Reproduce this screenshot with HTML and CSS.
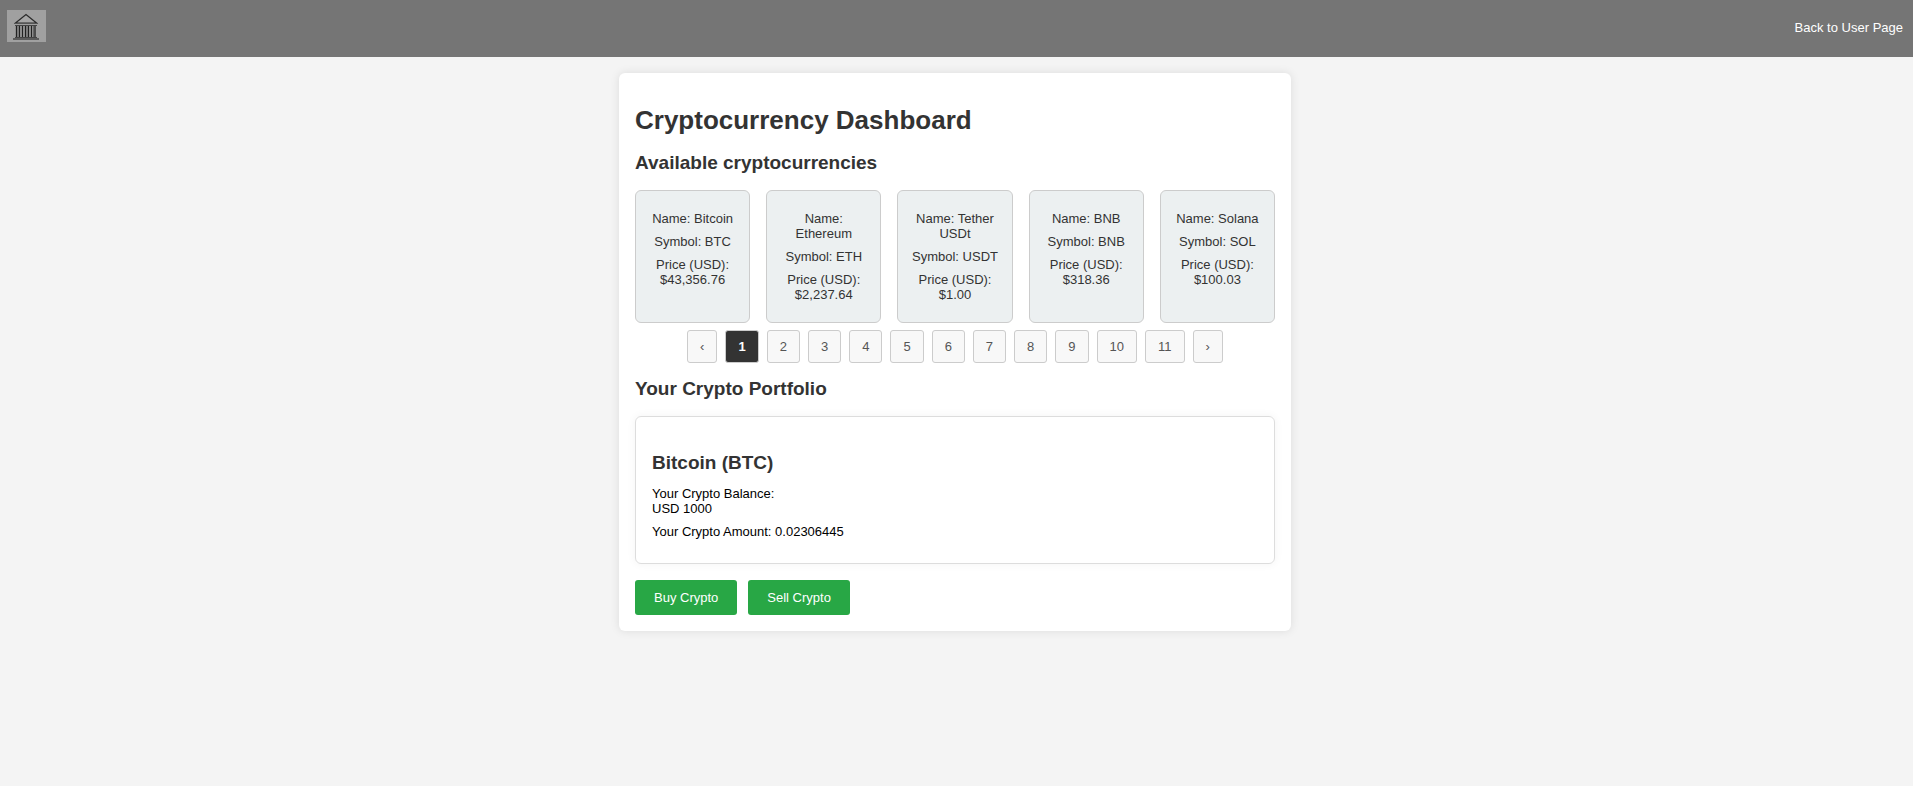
FILE: index.html
```html
<!DOCTYPE html>
<html lang="en">
<head>
<meta charset="utf-8">
<title>Cryptocurrency Dashboard</title>
<link rel="stylesheet" href="styles.css">
</head>
<body>
<header class="navbar">
  <a class="logo" href="#" aria-label="Home">
    <svg width="39" height="32" viewBox="0 0 39 32" aria-hidden="true">
      <rect width="39" height="32" fill="#a0a0a0"/>
      <path d="M8.5 13 19 4.5 29.5 13Z" fill="#a6a6a6" stroke="#2a2a2a" stroke-width="1.2"/>
      <path d="M7 13.5H31" stroke="#555" stroke-width="1"/>
      <path d="M8 15.5H30" stroke="#444" stroke-width="1"/>
      <path d="M9.5 16V27M12.5 16V27M15.5 16V27M18.5 16V27M21.5 16V27M24.5 16V27M28 16V27" stroke="#222" stroke-width="1.3"/>
      <path d="M11 16V27M20 16V27M26.5 16V27" stroke="#666" stroke-width="1"/>
      <path d="M8 27.5H30" stroke="#444" stroke-width="1"/>
      <path d="M6 29H32" stroke="#5c5c5c" stroke-width="2"/>
    </svg>
  </a>
  <a class="nav-link" href="#">Back to User Page</a>
</header>
<div class="page">
<main class="container">
  <h1>Cryptocurrency Dashboard</h1>
  <h2>Available cryptocurrencies</h2>
  <div class="crypto-list">
    <article class="crypto-card"><p>Name: Bitcoin</p><p>Symbol: BTC</p><p>Price (USD): $43,356.76</p></article>
    <article class="crypto-card"><p>Name: Ethereum</p><p>Symbol: ETH</p><p>Price (USD): $2,237.64</p></article>
    <article class="crypto-card"><p>Name: Tether USDt</p><p>Symbol: USDT</p><p>Price (USD): $1.00</p></article>
    <article class="crypto-card"><p>Name: BNB</p><p>Symbol: BNB</p><p>Price (USD): $318.36</p></article>
    <article class="crypto-card"><p>Name: Solana</p><p>Symbol: SOL</p><p>Price (USD): $100.03</p></article>
  </div>
  <nav class="pagination" aria-label="Pages">
    <a href="#" aria-label="Previous">‹</a>
    <a href="#" class="active" aria-current="page">1</a>
    <a href="#">2</a>
    <a href="#">3</a>
    <a href="#">4</a>
    <a href="#">5</a>
    <a href="#">6</a>
    <a href="#">7</a>
    <a href="#">8</a>
    <a href="#">9</a>
    <a href="#">10</a>
    <a href="#">11</a>
    <a href="#" aria-label="Next">›</a>
  </nav>
  <h2>Your Crypto Portfolio</h2>
  <section class="portfolio">
    <h2>Bitcoin (BTC)</h2>
    <p>Your Crypto Balance:<br>USD 1000</p>
    <p>Your Crypto Amount: 0.02306445</p>
  </section>
  <div class="actions">
    <button type="button">Buy Crypto</button>
    <button type="button">Sell Crypto</button>
  </div>
</main>
</div>
</body>
</html>
```
FILE: styles.css
```css
* {
  box-sizing: border-box;
}

body {
  margin: 0;
  background: #f4f4f4;
  color: #000;
  font: 13px/15px "Liberation Sans", Arial, sans-serif;
}

h1, h2, p {
  margin: 0;
}

h1, h2 {
  color: #333;
}

h1 {
  margin-top: 16px;
  font-size: 26px;
  line-height: 30px;
}

h2 {
  margin: 16px 0;
  font-size: 19px;
  line-height: 23px;
}

.navbar {
  display: flex;
  justify-content: space-between;
  align-items: flex-start;
  padding: 10px 10px 15px 7px;
  background: #757575;
}

.logo, .logo svg {
  display: block;
}

.nav-link {
  padding-top: 10px;
  color: #fff;
  text-decoration: none;
}

.page {
  padding: 16px 3px 16px 0;
}

.container {
  max-width: 672px;
  margin: 0 auto;
  padding: 16px;
  border-radius: 6px;
  background: #fff;
  box-shadow: 0 0 10px rgba(0, 0, 0, 0.1);
}

.crypto-list {
  display: grid;
  grid-template-columns: repeat(5, 1fr);
  gap: 16px;
}

.crypto-card {
  display: flex;
  flex-direction: column;
  gap: 8px;
  padding: 20px 12px;
  border: 1px solid #ccc;
  border-radius: 6px;
  background: #ecf0f1;
  color: #333;
  text-align: center;
}

.pagination {
  display: flex;
  justify-content: center;
  gap: 8px;
  margin: 7px 0 14px;
}

.pagination + h2 {
  margin-top: 0;
}

.pagination a {
  padding: 8px 12px;
  border: 1px solid #ccc;
  border-radius: 3px;
  background: #f8f8f8;
  color: #555;
  text-decoration: none;
}

.pagination .active {
  background: #333;
  color: #fff;
  font-weight: bold;
}

.portfolio {
  padding: 18px 16px 24px;
  border: 1px solid #ddd;
  border-radius: 6px;
  box-shadow: 0 0 10px rgba(0, 0, 0, 0.05);
}

.portfolio h2 {
  margin-bottom: 12px;
}

.portfolio p + p {
  margin-top: 8px;
}

.actions {
  display: flex;
  gap: 11px;
  margin-top: 16px;
}

.actions button {
  padding: 10px 19px;
  border: 0;
  border-radius: 3px;
  background: #28a745;
  color: #fff;
  font: inherit;
  cursor: pointer;
}
```
